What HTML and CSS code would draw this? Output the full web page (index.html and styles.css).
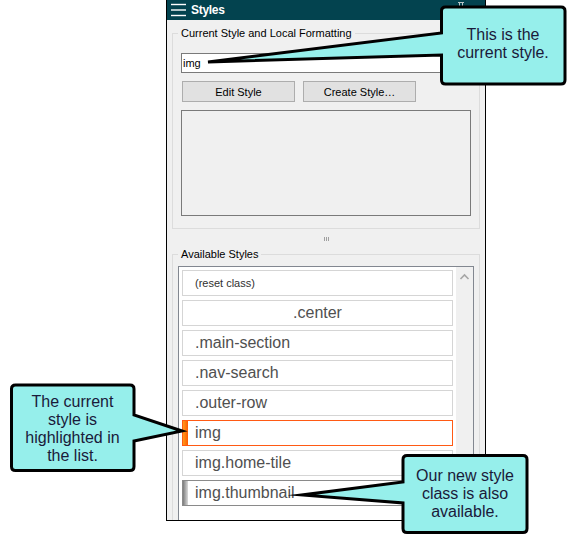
FILE: index.html
```html
<!DOCTYPE html>
<html lang="en">
<head>
<meta charset="utf-8">
<title>Styles</title>
<link rel="stylesheet" href="styles.css">
</head>
<body>
<div class="page">
  <div class="panel">
    <div class="titlebar">
      <svg class="menu-icon" width="15" height="20" viewBox="0 0 15 20">
        <rect x="0" y="3.8" width="15" height="1.4" fill="#fff"/>
        <rect x="0" y="9.3" width="15" height="1.4" fill="#fff"/>
        <rect x="0" y="14.8" width="15" height="1.4" fill="#fff"/>
      </svg>
      <span class="title">Styles</span>
      <svg class="pin-icon" width="10" height="12" viewBox="0 0 10 12">
        <path d="M2 1.5 H8 M3.5 1.5 V7 M6.5 1.5 V7 M1 7 H9 M5 7 V11" stroke="#b8c4c6" stroke-width="1" fill="none"/>
      </svg>
    </div>
    <div class="panel-body">
      <fieldset class="group group-current">
        <legend>Current Style and Local Formatting</legend>
        <div class="textbox">img</div>
        <div class="btn-row">
          <button class="btn">Edit Style</button>
          <button class="btn">Create Style…</button>
        </div>
        <div class="preview"></div>
      </fieldset>
      <div class="splitter"><span></span><span></span><span></span></div>
      <fieldset class="group group-avail">
        <legend>Available Styles</legend>
        <div class="listbox">
          <div class="items">
            <div class="item item-small">(reset class)</div>
            <div class="item item-center">.center</div>
            <div class="item">.main-section</div>
            <div class="item">.nav-search</div>
            <div class="item">.outer-row</div>
            <div class="item item-current">img</div>
            <div class="item">img.home-tile</div>
            <div class="item item-new">img.thumbnail</div>
          </div>
          <div class="scrollbar">
            <svg class="scroll-up" width="17" height="17" viewBox="0 0 17 17">
              <path d="M4.5 10 L8.5 6 L12.5 10" stroke="#a6a6a6" stroke-width="1.6" fill="none"/>
            </svg>
          </div>
        </div>
      </fieldset>
    </div>
  </div>

  <svg class="callouts" width="576" height="543" viewBox="0 0 576 543">
    <path class="callout-shape" d="M445.5,7 H561 Q565,7 565,11 V80 Q565,84 561,84 H445.5 Q441.5,84 441.5,80 V55 L208,62 L441.5,33 V11 Q441.5,7 445.5,7 Z"/>
    <path class="callout-shape" d="M15.5,385 H130 Q134,385 134,389 V415 L182,431 L134,441 V466.5 Q134,470.5 130,470.5 H15.5 Q11.5,470.5 11.5,466.5 V389 Q11.5,385 15.5,385 Z"/>
    <path class="callout-shape" d="M407,455.5 H523 Q527,455.5 527,459.5 V528.5 Q527,532.5 523,532.5 H407 Q403,532.5 403,528.5 V503 L302,495 L403,482 V459.5 Q403,455.5 407,455.5 Z"/>
  </svg>
  <div class="callout-text ct-current">This is the<br>current style.</div>
  <div class="callout-text ct-list">The current<br>style is<br>highlighted in<br>the list.</div>
  <div class="callout-text ct-new">Our new style<br>class is also<br>available.</div>
</div>
</body>
</html>
```

FILE: styles.css
```css
html, body {
  margin: 0;
  padding: 0;
  background: #ffffff;
}

body {
  font-family: "Liberation Sans", Arial, sans-serif;
  overflow: hidden;
}

.page {
  position: relative;
  width: 576px;
  height: 543px;
  overflow: hidden;
}

/* ---------- panel ---------- */
.panel {
  margin-left: 166px;
  width: 318px;
  height: 520px;
  border: 1px solid #000;
  border-top: none;
  background: #f0f0f0;
  overflow: hidden;
  display: flex;
  flex-direction: column;
}

.titlebar {
  flex: 0 0 20px;
  height: 20px;
  background: #03434f;
  display: flex;
  align-items: center;
  padding: 0 19px 0 4px;
}

.menu-icon {
  display: block;
  flex: 0 0 15px;
}

.title {
  margin-left: 5px;
  color: #ffffff;
  font-weight: bold;
  font-size: 12px;
  letter-spacing: -0.3px;
  line-height: 20px;
}

.pin-icon {
  display: block;
  margin-left: auto;
  margin-top: -6px;
}

.panel-body {
  padding: 0 5px;
  display: flex;
  flex-direction: column;
}

/* ---------- group boxes ---------- */
.group {
  margin: 0;
  border: 1px solid #dcdcdc;
  min-width: 0;
}

.group legend {
  font-size: 11px;
  line-height: 14px;
  color: #000;
  padding: 0 3px;
}

.group-current {
  margin-top: 6px;
  padding: 13px 8px 12px 8px;
}

.group-current legend {
  margin-left: -3px;
}

.textbox {
  height: 20px;
  box-sizing: border-box;
  border: 1px solid #7a7a7a;
  background: #ffffff;
  font-size: 11px;
  line-height: 18px;
  padding-left: 1px;
  color: #000;
}

.btn-row {
  display: flex;
  gap: 8px;
  margin: 8px 0 0 1px;
}

.btn {
  width: 113px;
  height: 21px;
  box-sizing: border-box;
  border: 1px solid #adadad;
  background: #e1e1e1;
  font-family: "Liberation Sans", Arial, sans-serif;
  font-size: 11px;
  color: #000;
  padding: 0;
  margin: 0;
}

.preview {
  margin-top: 8px;
  height: 106px;
  box-sizing: border-box;
  border: 1px solid #7a7a7a;
  background: #f0f0f0;
}

.splitter {
  flex: 0 0 18px;
  height: 18px;
  display: flex;
  justify-content: center;
  align-items: flex-start;
  gap: 1px;
  padding-top: 8px;
  box-sizing: border-box;
}

.splitter span {
  width: 1px;
  height: 4px;
  background: #a0a0a0;
}

.group-avail {
  padding: 5px 5px 0 5px;
}

/* ---------- list ---------- */
.listbox {
  display: flex;
  height: 280px;
  border: 1px solid #828790;
  background: #ffffff;
}

.items {
  width: 272px;
  padding: 3px;
  display: flex;
  flex-direction: column;
  gap: 4px;
}

.item {
  height: 26px;
  box-sizing: border-box;
  border: 1px solid #d5d5d5;
  background: #ffffff;
  display: flex;
  align-items: center;
  padding-left: 12px;
  font-size: 16px;
  color: #505050;
  white-space: nowrap;
}

.item-small {
  font-size: 11px;
  color: #303030;
}

.item-center {
  justify-content: center;
  padding-left: 0;
}

.item-current {
  border-color: #ff5a14;
  background: linear-gradient(to right, #ff9a1a, #ff5a00) 0 0 / 5px 100% no-repeat, #ffffff;
}

.item-new {
  border-color: #8a8a8a;
  background: linear-gradient(to right, #7c7c7c, #dadada) 0 0 / 5px 100% no-repeat, #ffffff;
}

.scrollbar {
  width: 17px;
  margin-left: auto;
  background: #f0f0f0;
}

.scroll-up {
  display: block;
  margin-top: 2px;
}

/* ---------- callouts ---------- */
.callouts {
  position: absolute;
  left: 0;
  top: 0;
  pointer-events: none;
}

.callout-shape {
  fill: #96efeb;
  stroke: #000;
  stroke-width: 3;
  stroke-linejoin: miter;
  stroke-miterlimit: 10;
}

.callout-text {
  position: absolute;
  text-align: center;
  font-size: 16px;
  line-height: 18px;
  color: #1a1a3a;
}

.ct-current {
  left: 441px;
  top: 26px;
  width: 124px;
}

.ct-list {
  left: 11px;
  top: 393px;
  width: 123px;
}

.ct-new {
  left: 403px;
  top: 467px;
  width: 124px;
}
```
